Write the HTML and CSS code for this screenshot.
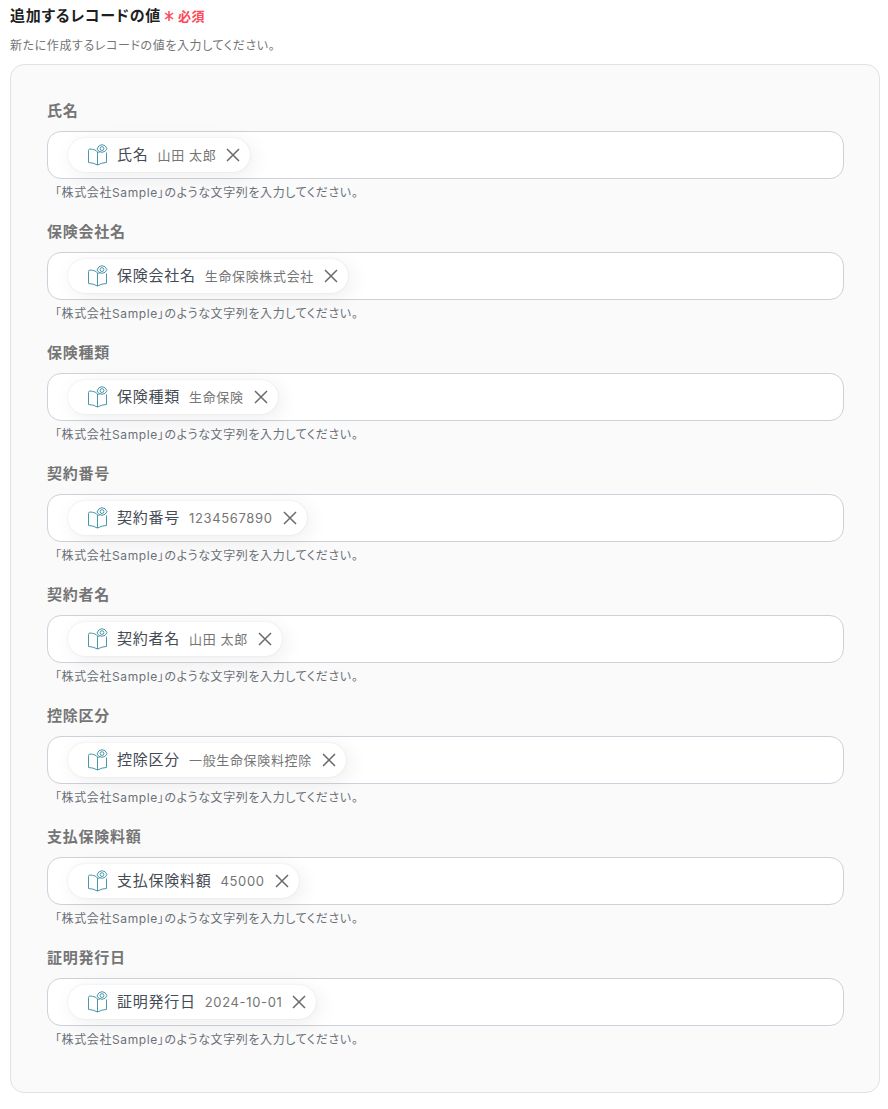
FILE: index.html
```
<!DOCTYPE html>
<html lang="ja">
<head>
<meta charset="utf-8">
<meta name="viewport" content="width=device-width, initial-scale=1">
<title>追加するレコードの値</title>
<link rel="stylesheet" href="styles.css">
</head>
<body>
<svg class="sprite" aria-hidden="true">
  <symbol id="book" viewBox="0 0 20 22">
    <path d="M7 6Q4 5 2 5 .5 5 .5 6.500V18.500Q5 18.500 9.500 21 14 18.500 18.500 18.500V8.500M9.500 21V8Q8.500 6.600 7 6M9.500 9Q10.500 8 12.500 7.500"/>
    <circle cx="14" cy="4.600" r="1.900"/>
    <path d="M9 5Q10.500 .7 14 .7 17.500 .7 19 4.600 17.500 8.300 14 8.300 10.500 8.300 9 5"/>
  </symbol>
  <symbol id="close" viewBox="0 0 14 14">
    <path d="M1 1 13 13M13 1 1 13"/>
  </symbol>
</svg>
<main class="page">
  <h1 class="title">追加するレコードの値<span class="required"><svg class="star" viewBox="0 0 10 10" aria-hidden="true"><path d="M5 0V10M1 2 9 8M9 2 1 8"/></svg>必須</span></h1>
  <p class="lead">新たに作成するレコードの値を入力してください。</p>
  <form class="panel">
    <div class="field">
      <label class="label" for="f1">氏名</label>
      <div class="box"><span class="chip"><svg class="book"><use href="#book"/></svg><span class="name">氏名</span><span class="value">山田 太郎</span><button class="remove" type="button" aria-label="削除"><svg class="close"><use href="#close"/></svg></button></span><input class="input" id="f1" type="text"></div>
      <p class="hint">「株式会社Sample」のような文字列を入力してください。</p>
    </div>
    <div class="field">
      <label class="label" for="f2">保険会社名</label>
      <div class="box"><span class="chip"><svg class="book"><use href="#book"/></svg><span class="name">保険会社名</span><span class="value">生命保険株式会社</span><button class="remove" type="button" aria-label="削除"><svg class="close"><use href="#close"/></svg></button></span><input class="input" id="f2" type="text"></div>
      <p class="hint">「株式会社Sample」のような文字列を入力してください。</p>
    </div>
    <div class="field">
      <label class="label" for="f3">保険種類</label>
      <div class="box"><span class="chip"><svg class="book"><use href="#book"/></svg><span class="name">保険種類</span><span class="value">生命保険</span><button class="remove" type="button" aria-label="削除"><svg class="close"><use href="#close"/></svg></button></span><input class="input" id="f3" type="text"></div>
      <p class="hint">「株式会社Sample」のような文字列を入力してください。</p>
    </div>
    <div class="field">
      <label class="label" for="f4">契約番号</label>
      <div class="box"><span class="chip"><svg class="book"><use href="#book"/></svg><span class="name">契約番号</span><span class="value">1234567890</span><button class="remove" type="button" aria-label="削除"><svg class="close"><use href="#close"/></svg></button></span><input class="input" id="f4" type="text"></div>
      <p class="hint">「株式会社Sample」のような文字列を入力してください。</p>
    </div>
    <div class="field">
      <label class="label" for="f5">契約者名</label>
      <div class="box"><span class="chip"><svg class="book"><use href="#book"/></svg><span class="name">契約者名</span><span class="value">山田 太郎</span><button class="remove" type="button" aria-label="削除"><svg class="close"><use href="#close"/></svg></button></span><input class="input" id="f5" type="text"></div>
      <p class="hint">「株式会社Sample」のような文字列を入力してください。</p>
    </div>
    <div class="field">
      <label class="label" for="f6">控除区分</label>
      <div class="box"><span class="chip"><svg class="book"><use href="#book"/></svg><span class="name">控除区分</span><span class="value">一般生命保険料控除</span><button class="remove" type="button" aria-label="削除"><svg class="close"><use href="#close"/></svg></button></span><input class="input" id="f6" type="text"></div>
      <p class="hint">「株式会社Sample」のような文字列を入力してください。</p>
    </div>
    <div class="field">
      <label class="label" for="f7">支払保険料額</label>
      <div class="box"><span class="chip"><svg class="book"><use href="#book"/></svg><span class="name">支払保険料額</span><span class="value">45000</span><button class="remove" type="button" aria-label="削除"><svg class="close"><use href="#close"/></svg></button></span><input class="input" id="f7" type="text"></div>
      <p class="hint">「株式会社Sample」のような文字列を入力してください。</p>
    </div>
    <div class="field">
      <label class="label" for="f8">証明発行日</label>
      <div class="box"><span class="chip"><svg class="book"><use href="#book"/></svg><span class="name">証明発行日</span><span class="value">2024-10-01</span><button class="remove" type="button" aria-label="削除"><svg class="close"><use href="#close"/></svg></button></span><input class="input" id="f8" type="text"></div>
      <p class="hint">「株式会社Sample」のような文字列を入力してください。</p>
    </div>
  </form>
</main>
</body>
</html>
```
FILE: styles.css
```
* { box-sizing: border-box; }
body {
  margin: 0;
  background: #fff;
  color: #1f1f1f;
  font-family: Inter, "Noto Sans CJK JP", sans-serif;
  font-feature-settings: "palt";
  letter-spacing: 0.05em;
}
/* Tracking is recomputed for each text size. */
.required, .lead, .label, .name, .value, .hint, .title { letter-spacing: 0.05em; }
.sprite { display: none; }
.page { padding: 4px 8px 16px 10px; }
.title {
  display: flex;
  align-items: center;
  gap: 3px;
  margin: 0;
  font-size: 15px;
  line-height: 24px;
  font-weight: 600;
}
.required {
  display: flex;
  align-items: center;
  gap: 4px;
  color: #ff4757;
  font-size: 13px;
  font-weight: 600;
}
.star { width: 10px; height: 10px; fill: none; stroke: currentColor; stroke-width: 1.5; }
.lead {
  margin: 8px 0;
  font-size: 12px;
  line-height: 20px;
  color: #757575;
}
.panel {
  display: flex;
  flex-direction: column;
  gap: 17px;
  padding: 34px 35px 42px 36px;
  border: 1px solid #dfe2e6;
  border-radius: 14px;
  background: #fafafa;
}
.field { display: flex; flex-direction: column; }
.label {
  margin-bottom: 8px;
  font-size: 15px;
  line-height: 24px;
  font-weight: 600;
  color: #757575;
}
.box {
  display: flex;
  align-items: center;
  min-height: 48px;
  padding: 0 20px;
  border: 1px solid #cdd1d9;
  border-radius: 14px;
  background: #fff;
}
.chip {
  display: flex;
  align-items: center;
  flex: none;
  height: 34px;
  padding: 0 10px 0 20px;
  border-radius: 17px;
  background: #fff;
  box-shadow: 0 0 2px rgba(0, 0, 0, 0.1), 4px 4px 20px rgba(0, 0, 0, 0.07);
}
.book { width: 20px; height: 22px; fill: none; stroke: #4a97a8; stroke-width: 1; }
.name { margin-left: 9px; font-size: 15px; line-height: 24px; color: #444b55; }
.value { margin-left: 9px; font-size: 13px; line-height: 20px; color: #757575; }
.remove {
  display: flex;
  margin: 0 0 0 10px;
  padding: 0;
  border: 0;
  background: none;
  color: #6a6a6a;
  cursor: pointer;
}
.close { width: 14px; height: 14px; fill: none; stroke: currentColor; stroke-width: 1.5; }
.input {
  flex: 1;
  min-width: 0;
  height: 32px;
  padding: 0 8px;
  border: 0;
  outline: 0;
  background: transparent;
  font: inherit;
}
.hint {
  margin: 4px 0 0 8px;
  font-size: 12px;
  line-height: 20px;
  color: #6b7078;
}
```
